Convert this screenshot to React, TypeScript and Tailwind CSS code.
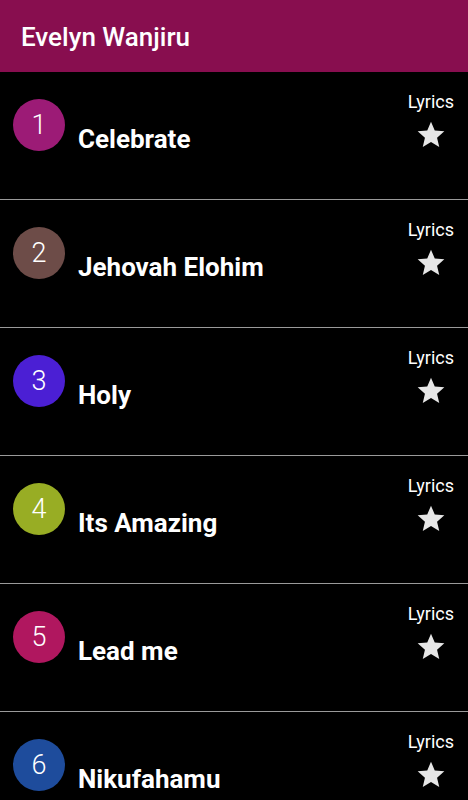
import React from "react";

const songs = [
  { n: 1, title: "Celebrate", color: "bg-[#9c1b76]" },
  { n: 2, title: "Jehovah Elohim", color: "bg-[#6d4c48]" },
  { n: 3, title: "Holy", color: "bg-[#4b1fd4]" },
  { n: 4, title: "Its Amazing", color: "bg-[#98ad24]" },
  { n: 5, title: "Lead me", color: "bg-[#b0175f]" },
  { n: 6, title: "Nikufahamu", color: "bg-[#1e4c9c]" },
];

function Star() {
  return (
    <svg width="32" height="32" viewBox="0 0 24 24" fill="#e6e6e6">
      <path d="M12 17.27L18.18 21l-1.64-7.03L22 9.24l-7.19-.61L12 2 9.19 8.63 2 9.24l5.46 4.73L5.82 21z" />
    </svg>
  );
}

export default function App() {
  return (
    <div className="w-[468px] h-[800px] overflow-hidden bg-black font-['Roboto',sans-serif]">
      <div className="h-[72px] bg-[#880e4f] pl-[21px] pt-[23px]">
        <div className="text-[26px] leading-[28px] font-medium text-white">Evelyn Wanjiru</div>
      </div>
      {songs.map((s) => (
        <div key={s.n} className="flex h-[128px] border-b border-[#9a9a9a] shrink-0">
          <div
            className={`ml-[13px] mt-[27px] w-[52px] h-[52px] rounded-full ${s.color} flex items-center justify-center text-[27px] font-light text-white shrink-0`}
          >
            {s.n}
          </div>
          <div className="ml-[13px] mt-[53px] flex-1 text-[26px] leading-[28px] font-bold text-white">
            {s.title}
          </div>
          <div className="flex flex-col items-center pr-[14px] pt-[19px]">
            <div className="text-[18px] leading-[21px] text-white">Lyrics</div>
            <div className="mt-[7px]">
              <Star />
            </div>
          </div>
        </div>
      ))}
    </div>
  );
}
